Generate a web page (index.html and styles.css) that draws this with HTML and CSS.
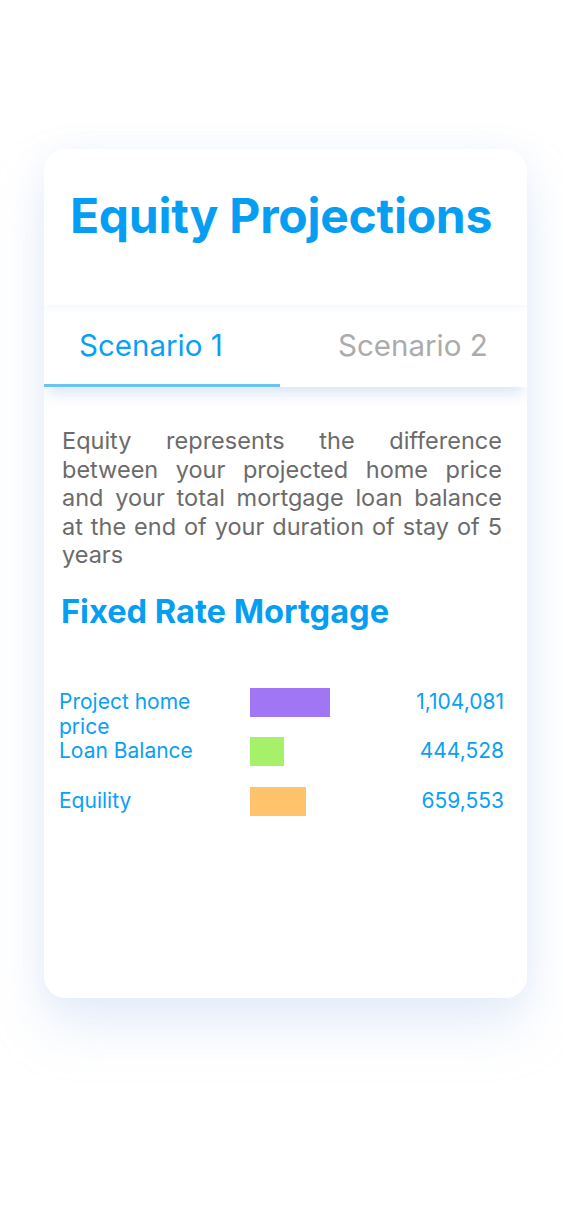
FILE: index.html
```html
<!DOCTYPE html>
<html lang="en">
<head>
<meta charset="utf-8">
<title>Equity Projections</title>
<link rel="stylesheet" href="styles.css">
</head>
<body>
<div class="page">
  <div class="card">
    <div class="header">
      <h1 class="title">Equity Projections</h1>
    </div>
    <div class="tabs">
      <div class="tab tab-active">Scenario 1</div>
      <div class="tab tab-inactive">Scenario 2</div>
    </div>
    <div class="content">
      <p class="desc">Equity represents the difference between your projected home price and your total mortgage loan balance at the end of your duration of stay of 5 years</p>
      <h2 class="subtitle">Fixed Rate Mortgage</h2>
      <div class="rows">
        <div class="row">
          <div class="label">Project home price</div>
          <div class="bar-cell"><div class="bar bar-purple" style="width:80px"></div></div>
          <div class="value">1,104,081</div>
        </div>
        <div class="row">
          <div class="label">Loan Balance</div>
          <div class="bar-cell"><div class="bar bar-green" style="width:34px"></div></div>
          <div class="value">444,528</div>
        </div>
        <div class="row">
          <div class="label">Equility</div>
          <div class="bar-cell"><div class="bar bar-orange" style="width:56px"></div></div>
          <div class="value">659,553</div>
        </div>
      </div>
    </div>
  </div>
</div>
</body>
</html>
```

FILE: styles.css
```css
* { box-sizing: border-box; }
html, body { margin: 0; padding: 0; background: #ffffff; }
body { font-family: Inter, "Noto Sans", sans-serif; }

.page {
  width: 563px;
  height: 1219px;
  padding: 149px 36px 0 44px;
}

.card {
  width: 483px;
  height: 849px;
  background: #ffffff;
  border-radius: 22px;
  box-shadow: 0 30px 50px rgba(190, 210, 240, 0.35), 0 0 30px rgba(215, 226, 246, 0.3);
  overflow: hidden;
  display: flex;
  flex-direction: column;
}

.header {
  height: 156px;
  display: flex;
  justify-content: center;
  padding-top: 38px;
  padding-right: 9px;
  background: #ffffff;
  box-shadow: 0 3px 8px rgba(220, 228, 240, 0.35);
  position: relative;
  z-index: 1;
}

.title {
  margin: 0;
  font-size: 48px;
  font-weight: 700;
  line-height: 58px;
  color: #059ef3;
  letter-spacing: -0.25px;
}

.tabs {
  margin-top: 8px;
  height: 74px;
  display: flex;
  background: #ffffff;
  position: relative;
  z-index: 2;
  box-shadow: 0 10px 14px -4px rgba(170, 196, 232, 0.45);
}

.tab {
  font-size: 29.5px;
  line-height: 36px;
  padding-top: 14px;
}

.tab-active {
  width: 236px;
  padding-left: 35px;
  color: #0aa0f3;
  border-bottom: 3px solid #6bc3f0;
}

.tab-inactive {
  flex: 1;
  padding-left: 58px;
  color: #ababab;
}

.content {
  flex: 1;
  padding: 40px 25px 0 18px;
  background: #ffffff;
}

.desc {
  margin: 0;
  font-size: 23.5px;
  line-height: 28.6px;
  color: #6b6b6b;
  text-align: justify;
}

.subtitle {
  margin: 22px 0 0 -1px;
  font-size: 32.6px;
  font-weight: 700;
  line-height: 39px;
  color: #059ef3;
}

.rows {
  margin-top: 57px;
  margin-left: -3px;
  margin-right: -2px;
  display: flex;
  flex-direction: column;
}

.row {
  height: 49.5px;
  display: flex;
  align-items: flex-start;
}

.label {
  width: 191px;
  padding-right: 35px;
  padding-top: 1px;
  font-size: 21px;
  line-height: 25px;
  color: #0aa0f3;
}

.bar-cell {
  flex: 1;
}

.bar {
  height: 29px;
}

.bar-purple { background: #a076f5; }
.bar-green { background: #a7f16a; }
.bar-orange { background: #ffc46b; }

.value {
  padding-top: 1px;
  font-size: 21px;
  line-height: 25px;
  color: #0aa0f3;
  text-align: right;
}
```
